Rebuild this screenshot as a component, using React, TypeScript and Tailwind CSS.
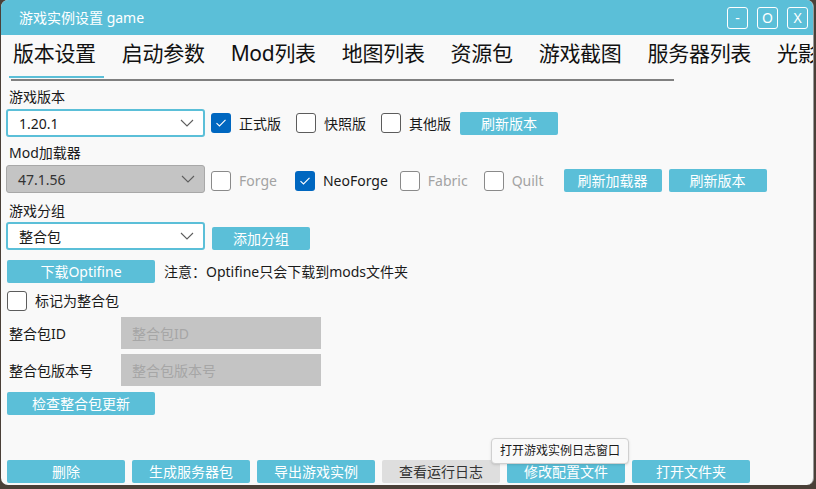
import React from "react";

const font = { fontFamily: '"Noto Sans", "Noto Sans CJK SC", sans-serif' };

function Chevron() {
  return (
    <svg width="14" height="8" viewBox="0 0 14 8" className="shrink-0">
      <path d="M1 1 L7 7 L13 1" fill="none" stroke="#5f5f5f" strokeWidth="1.1" />
    </svg>
  );
}

function Combo({ value, disabled }: { value: string; disabled?: boolean }) {
  return (
    <div
      className={`w-[199px] h-[28px] ml-[5px] rounded-[3px] flex items-center justify-between pl-[11px] pr-[9px] text-[14px] ${
        disabled
          ? "bg-[#c4c4c4] border border-[#a8a8a8] text-[#333]"
          : "bg-white border-2 border-[#5bbfd8] text-[#1a1a1a]"
      }`}
    >
      <span>{value}</span>
      <Chevron />
    </div>
  );
}

function Check({
  label,
  checked,
  disabled,
  className = "",
}: {
  label: string;
  checked?: boolean;
  disabled?: boolean;
  className?: string;
}) {
  return (
    <div className={`flex items-center ${className}`}>
      {checked ? (
        <div className="w-[20px] h-[20px] rounded-[3px] bg-[#0067c0] flex items-center justify-center">
          <svg width="12" height="10" viewBox="0 0 12 10">
            <path d="M1.5 5.2 L4.5 8 L10.5 1.8" fill="none" stroke="white" strokeWidth="1.1" />
          </svg>
        </div>
      ) : (
        <div
          className={`w-[20px] h-[20px] rounded-[3px] bg-white border ${
            disabled ? "border-[#8a8a8a]" : "border-[#5c5c5c]"
          }`}
        />
      )}
      <span className={`ml-[8px] text-[14px] ${disabled ? "text-[#a3a3a3]" : "text-[#1a1a1a]"}`}>{label}</span>
    </div>
  );
}

function Btn({
  children,
  w,
  gray,
  className = "",
}: {
  children: React.ReactNode;
  w: string;
  gray?: boolean;
  className?: string;
}) {
  return (
    <div
      className={`${w} h-[23px] rounded-[2px] flex items-center justify-center text-[14px] shrink-0 ${
        gray ? "bg-[#dedede] text-[#333]" : "bg-[#5bbfd8] text-white"
      } ${className}`}
    >
      {children}
    </div>
  );
}

const tabs = ["版本设置", "启动参数", "Mod列表", "地图列表", "资源包", "游戏截图", "服务器列表", "光影"];

export default function App() {
  return (
    <div className="w-[816px] h-[489px] bg-[#4a4038] overflow-hidden" style={font}>
      <div className="w-[813px] h-[485px] ml-[1px] rounded-[7px] overflow-hidden bg-[#f9f9f9] flex flex-col relative border-r border-[#9a9a9a]">
        {/* title bar */}
        <div className="h-[35px] bg-[#5bbfd8] flex items-center shrink-0">
          <span className="ml-[18px] text-white text-[14px]">游戏实例设置 game</span>
          <div className="ml-auto mr-[5px] flex gap-[9px]">
            {["-", "O", "X"].map((c) => (
              <div
                key={c}
                className="w-[21px] h-[22px] border border-white rounded-[3px] text-white text-[14px] flex items-center justify-center"
              >
                {c}
              </div>
            ))}
          </div>
        </div>

        {/* tabs */}
        <div className="h-[32px] flex items-end pl-[12px] gap-[26px] whitespace-nowrap shrink-0 overflow-hidden">
          {tabs.map((t) => (
            <span key={t} className="text-[21px] leading-[28px] text-[#111] tracking-[-0.3px]">
              {t}
            </span>
          ))}
        </div>
        <div className="h-[2px] w-[95px] ml-[8px] mt-[9px] bg-[#5bbfd8] shrink-0" />
        <div className="h-[2px] w-[663px] ml-[10px] mt-[1px] bg-[#808080] shrink-0" />

        {/* content */}
        <div className="h-[20px] mt-[5px] pl-[8px] flex items-center text-[14px] text-[#1a1a1a]">游戏版本</div>
        <div className="h-[34px] flex items-center">
          <Combo value="1.20.1" />
          <Check label="正式版" checked className="ml-[6px]" />
          <Check label="快照版" className="ml-[15px]" />
          <Check label="其他版" className="ml-[15px]" />
          <Btn w="w-[98px]" className="ml-[9px]">刷新版本</Btn>
        </div>

        <div className="h-[20px] mt-[2px] pl-[8px] flex items-center text-[14px] text-[#1a1a1a]">Mod加载器</div>
        <div className="h-[34px] flex items-center">
          <Combo value="47.1.56" disabled />
          <div className="flex items-center mt-[3px]">
            <Check label="Forge" disabled className="ml-[6px]" />
            <Check label="NeoForge" checked className="ml-[18px]" />
            <Check label="Fabric" disabled className="ml-[12px]" />
            <Check label="Quilt" disabled className="ml-[16px]" />
            <Btn w="w-[98px]" className="ml-[20px]">刷新加载器</Btn>
            <Btn w="w-[98px]" className="ml-[7px]">刷新版本</Btn>
          </div>
        </div>

        <div className="h-[20px] mt-[4px] pl-[8px] flex items-center text-[14px] text-[#1a1a1a]">游戏分组</div>
        <div className="h-[32px] flex items-center">
          <Combo value="整合包" />
          <Btn w="w-[98px]" className="ml-[7px] mt-[5px]">添加分组</Btn>
        </div>

        <div className="flex items-center mt-[8px] pl-[6px]">
          <Btn w="w-[148px]">下载Optifine</Btn>
          <span className="ml-[9px] text-[14px] text-[#1a1a1a]">注意：Optifine只会下载到mods文件夹</span>
        </div>

        <div className="mt-[7px] pl-[6px]">
          <Check label="标记为整合包" />
        </div>

        <div className="flex items-center mt-[6px] pl-[8px]">
          <span className="w-[112px] text-[14px] text-[#1a1a1a]">整合包ID</span>
          <div className="w-[200px] h-[32px] bg-[#c4c4c4] flex items-center pl-[11px] text-[14px] text-[#a6a6a6]">
            整合包ID
          </div>
        </div>
        <div className="flex items-center mt-[5px] pl-[8px]">
          <span className="w-[112px] text-[14px] text-[#1a1a1a]">整合包版本号</span>
          <div className="w-[200px] h-[32px] bg-[#c4c4c4] flex items-center pl-[11px] text-[14px] text-[#a6a6a6]">
            整合包版本号
          </div>
        </div>

        <div className="mt-[6px] pl-[6px]">
          <Btn w="w-[148px]">检查整合包更新</Btn>
        </div>

        {/* bottom bar */}
        <div className="mt-auto mb-[2px] pl-[6px] flex gap-[7px]">
          <Btn w="w-[118px]">删除</Btn>
          <Btn w="w-[118px]">生成服务器包</Btn>
          <Btn w="w-[118px]">导出游戏实例</Btn>
          <Btn w="w-[118px]" gray>查看运行日志</Btn>
          <Btn w="w-[118px]">修改配置文件</Btn>
          <Btn w="w-[118px]">打开文件夹</Btn>
        </div>

        {/* tooltip */}
        <div className="absolute left-[490px] top-[438px] w-[138px] h-[26px] rounded-[4px] bg-[#f9f9f9] border border-[#d0d0d0] shadow-sm flex items-center justify-center text-[12px] text-[#1a1a1a]">
          打开游戏实例日志窗口
        </div>
      </div>
    </div>
  );
}
